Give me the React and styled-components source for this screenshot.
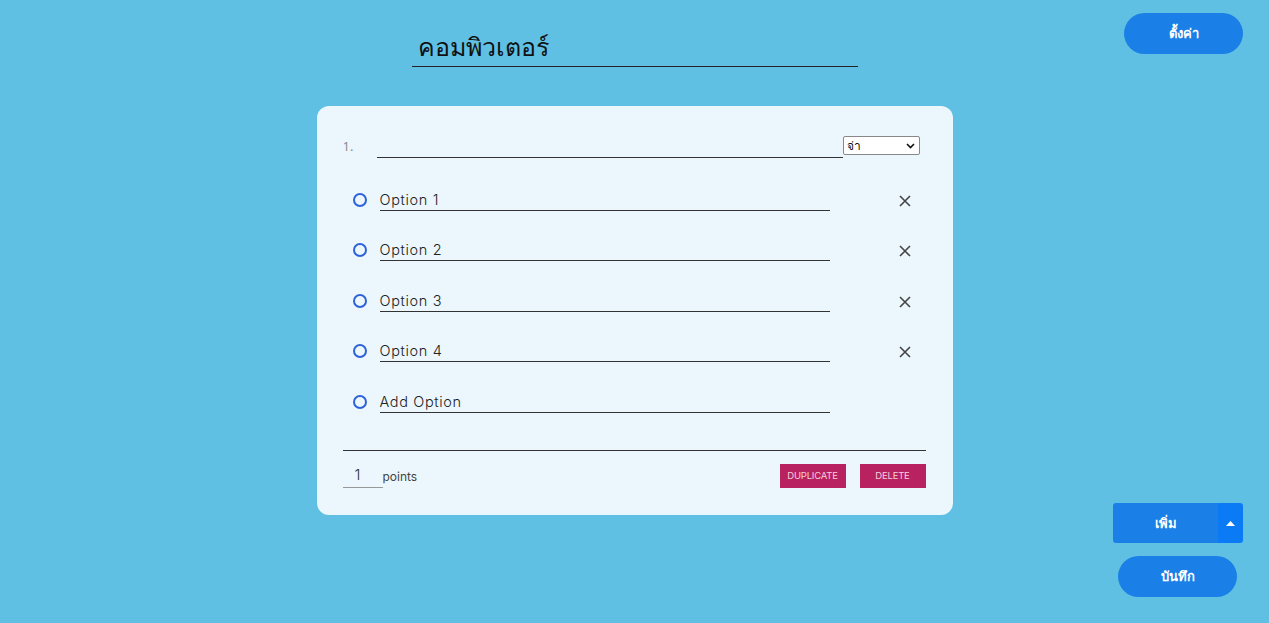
import React from "react";
import styled, { createGlobalStyle } from "styled-components";

const Global = createGlobalStyle`
  html, body { margin: 0; padding: 0; background: #5fc0e4; }
  body { font-family: "Noto Sans", "Liberation Sans", sans-serif; }
  * { box-sizing: border-box; }
`;

const Page = styled.div`
  width: 1269px;
  height: 623px;
  position: relative;
  display: flex;
  flex-direction: column;
  align-items: center;
  padding-top: 26px;
`;

const TitleInput = styled.div`
  width: 446px;
  height: 41px;
  border-bottom: 1px solid #222;
  padding-left: 6px;
  font-size: 25px;
  font-weight: 500;
  color: #111;
  line-height: 40px;
`;

const Card = styled.div`
  margin-top: 39px;
  width: 636px;
  height: 409px;
  background: #ebf7fc;
  border-radius: 12px;
  padding: 29px 26px 0 26px;
  display: flex;
  flex-direction: column;
`;

const QuestionRow = styled.div`
  display: flex;
  align-items: flex-start;
  height: 22px;
`;

const Num = styled.div`
  width: 34px;
  font-family: "Open Sans", sans-serif;
  font-size: 13px;
  color: #888;
  padding-top: 2px;
`;

const QuestionLine = styled.div`
  width: 466px;
  height: 23px;
  border-bottom: 1.5px solid #333;
`;

const Select = styled.div`
  margin-top: 1px;
  width: 77px;
  height: 19px;
  background: #fff;
  border: 1px solid #888;
  border-radius: 2px;
  display: flex;
  align-items: center;
  justify-content: space-between;
  padding: 0 4px 0 3px;
  font-size: 12px;
  color: #111;
`;

const Options = styled.div`
  margin-top: 31px;
  display: flex;
  flex-direction: column;
`;

const OptionRow = styled.div`
  height: 50.4px;
  display: flex;
  align-items: flex-start;
  padding-left: 10px;
`;

const Radio = styled.div`
  width: 14px;
  height: 14px;
  border: 2px solid #2e62d8;
  border-radius: 50%;
  margin-top: 5px;
`;

const OptionField = styled.div`
  margin-left: 13px;
  width: 450px;
  height: 23px;
  border-bottom: 1.5px solid #333;
  font-family: "Inter", "Open Sans", sans-serif;
  font-size: 14.5px;
  font-weight: 300;
  letter-spacing: 0.65px;
  color: #222;
  line-height: 24px;
`;

const RemoveBtn = styled.div`
  margin-left: 68px;
  margin-top: 6px;
  width: 14px;
  height: 14px;
  display: flex;
`;

const Divider = styled.div`
  margin-top: 10px;
  width: 583px;
  border-top: 1.5px solid #333;
`;

const Footer = styled.div`
  margin-top: 13px;
  width: 583px;
  display: flex;
  align-items: center;
`;

const PointsInput = styled.div`
  width: 40px;
  height: 24px;
  border-bottom: 1.5px solid #999;
  padding-left: 12px;
  font-family: "Inter", sans-serif;
  font-size: 15px;
  font-weight: 300;
  color: #333;
  line-height: 22px;
`;

const PointsLabel = styled.div`
  font-family: "Inter", sans-serif;
  font-size: 12px;
  color: #444;
  margin-top: 2px;
`;

const Spacer = styled.div` flex: 1; `;

const ActionBtn = styled.div`
  height: 24px;
  width: 66px;
  background: #b92260;
  color: #f3d0dd;
  font-family: "Inter", sans-serif;
  font-size: 9.5px;
  letter-spacing: -0.2px;
  display: flex;
  align-items: center;
  justify-content: center;
  margin-left: ${p => p.$gap || 0}px;
`;

const Pill = styled.div`
  position: absolute;
  left: ${p => p.$x}px;
  top: ${p => p.$y}px;
  width: ${p => p.$w}px;
  height: 41px;
  border-radius: 21px;
  background: #1a7fe6;
  color: #fff;
  font-weight: 600;
  font-size: 13px;
  display: flex;
  align-items: center;
  justify-content: center;
`;

const Split = styled.div`
  position: absolute;
  left: 1113px;
  top: 503px;
  width: 130px;
  height: 40px;
  border-radius: 3px;
  overflow: hidden;
  display: flex;
  color: #fff;
  font-weight: 600;
  font-size: 13px;
`;

const SplitMain = styled.div`
  flex: 1;
  background: #1a7fe6;
  display: flex;
  align-items: center;
  justify-content: center;
`;

const SplitArrow = styled.div`
  width: 25px;
  background: #0a7bf5;
  display: flex;
  align-items: center;
  justify-content: center;
`;

const X = () => (
  <svg width="14" height="14" viewBox="0 0 14 14">
    <path d="M2 2L12 12M12 2L2 12" stroke="#444" strokeWidth="1.6" />
  </svg>
);

const options = ["Option 1", "Option 2", "Option 3", "Option 4"];

export default function App() {
  return (
    <Page>
      <Global />
      <TitleInput>คอมพิวเตอร์</TitleInput>
      <Card>
        <QuestionRow>
          <Num>1.</Num>
          <QuestionLine />
          <Select>
            <span>จ่า</span>
            <svg width="9" height="6" viewBox="0 0 9 6">
              <path d="M1 1L4.5 4.5L8 1" stroke="#111" strokeWidth="1.6" fill="none" />
            </svg>
          </Select>
        </QuestionRow>
        <Options>
          {options.map(o => (
            <OptionRow key={o}>
              <Radio />
              <OptionField>{o}</OptionField>
              <RemoveBtn><X /></RemoveBtn>
            </OptionRow>
          ))}
          <OptionRow>
            <Radio />
            <OptionField>Add Option</OptionField>
          </OptionRow>
        </Options>
        <Divider />
        <Footer>
          <PointsInput>1</PointsInput>
          <PointsLabel>points</PointsLabel>
          <Spacer />
          <ActionBtn>DUPLICATE</ActionBtn>
          <ActionBtn $gap={14}>DELETE</ActionBtn>
        </Footer>
      </Card>
      <Pill $x={1124} $y={13} $w={119}>ตั้งค่า</Pill>
      <Split>
        <SplitMain>เพิ่ม</SplitMain>
        <SplitArrow>
          <svg width="9" height="5" viewBox="0 0 9 5"><path d="M0 5L4.5 0L9 5Z" fill="#fff" /></svg>
        </SplitArrow>
      </Split>
      <Pill $x={1118} $y={556} $w={119}>บันทึก</Pill>
    </Page>
  );
}
